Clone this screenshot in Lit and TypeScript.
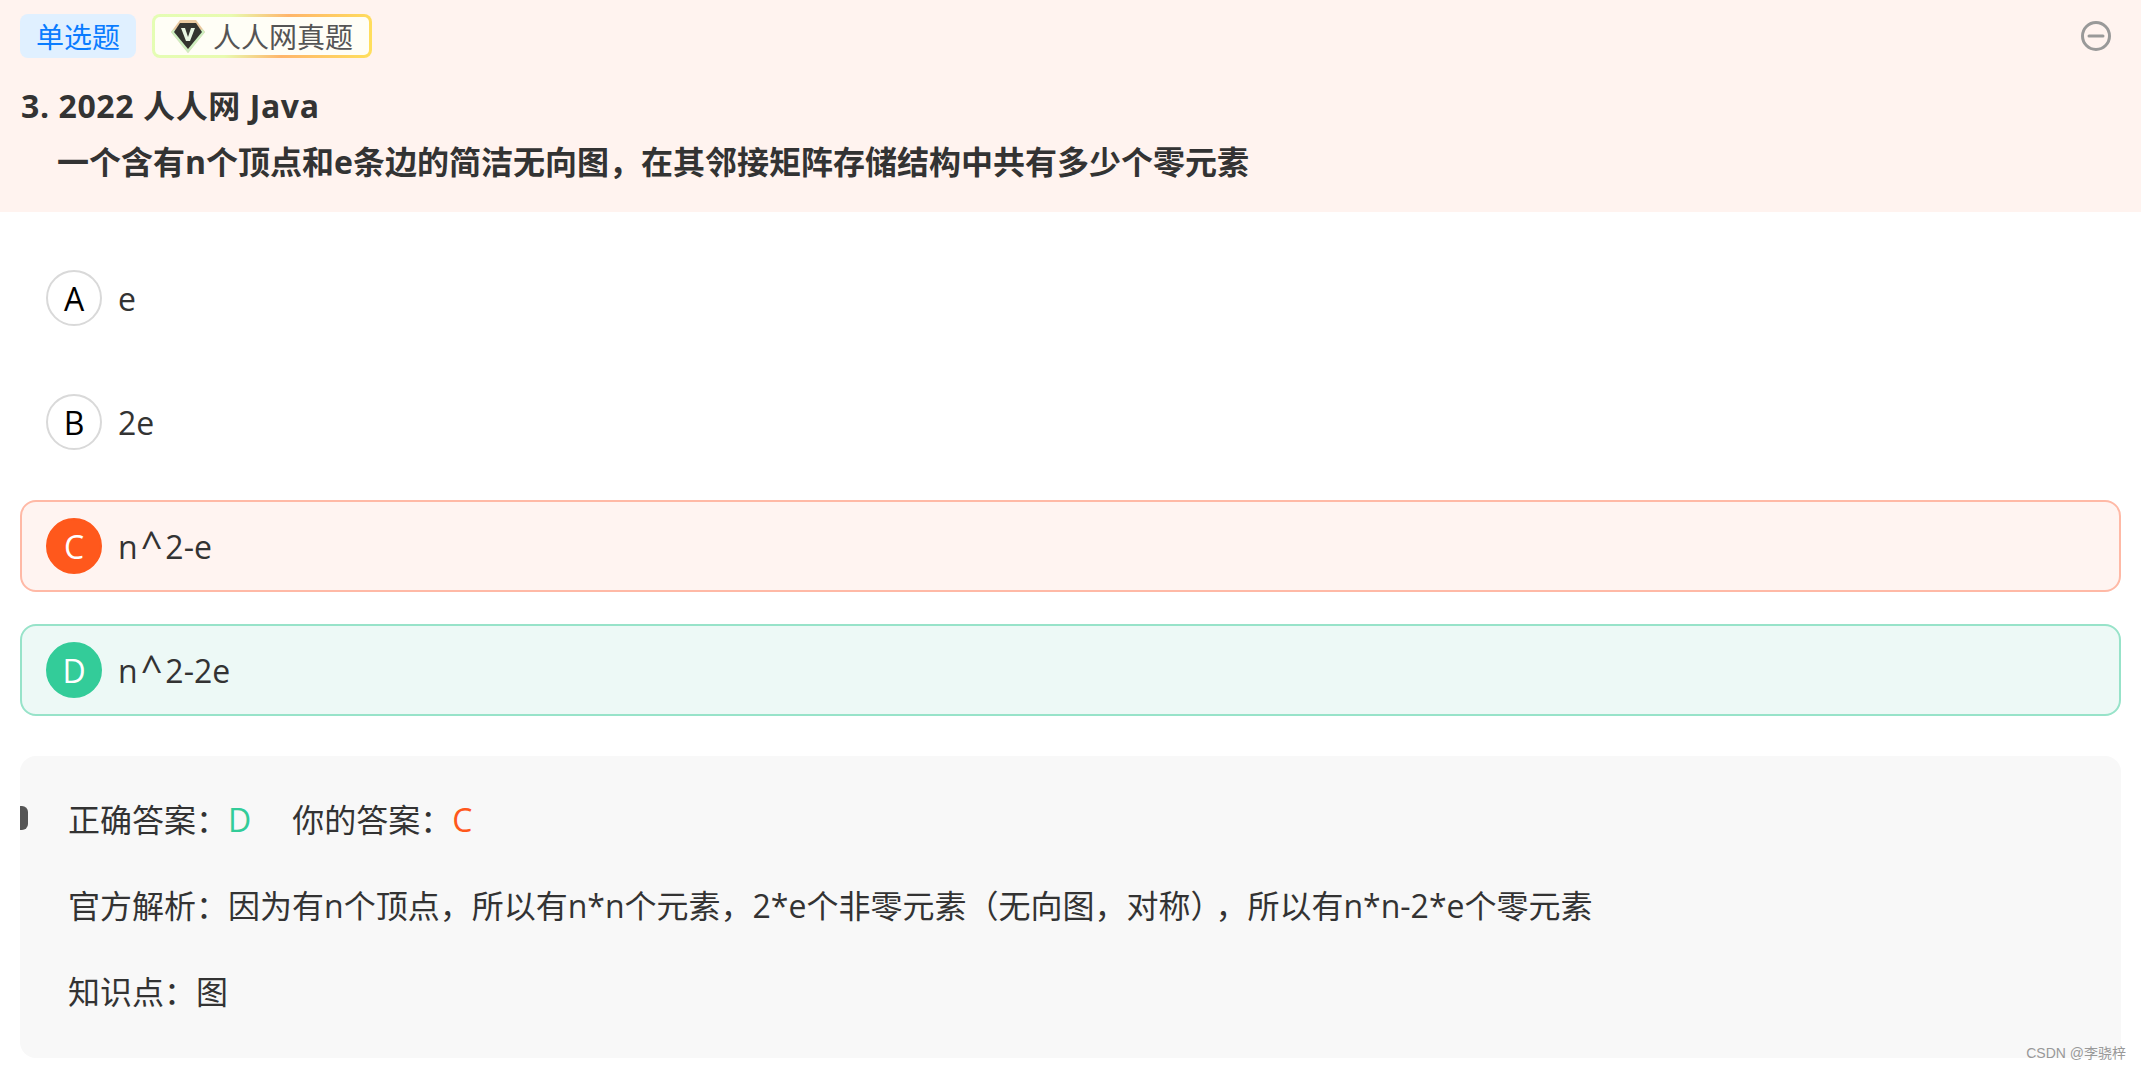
import { LitElement, css, html } from "lit";
import { customElement } from "lit/decorators.js";

const OPTIONS = [
  { key: "A", text: "e", state: "" },
  { key: "B", text: "2e", state: "" },
  { key: "C", text: "n^2-e", state: "wrong" },
  { key: "D", text: "n^2-2e", state: "right" },
];

@customElement("app-root")
export class AppRoot extends LitElement {
  static styles = css`
    :host {
      display: block;
      position: relative;
      height: 1069px;
      background: #fff;
      color: #333;
      font-family: "Open Sans", "Noto Sans CJK SC", sans-serif;
      font-size: 32px;
      text-spacing-trim: space-all;
      overflow: hidden;
    }

    .header {
      height: 212px;
      box-sizing: border-box;
      padding: 14px 20px 0;
      background: #fff3ef;
    }

    .tags {
      display: flex;
      align-items: center;
      gap: 16px;
      height: 44px;
    }

    .tag {
      display: flex;
      align-items: center;
      box-sizing: border-box;
      height: 44px;
      border-radius: 8px;
      font-size: 28px;
    }

    .tag.type {
      width: 116px;
      justify-content: center;
      background: #e0f0ff;
      color: #0a7cff;
    }

    .tag.source {
      width: 220px;
      padding-left: 16px;
      gap: 8px;
      color: #555;
      border: 3px solid transparent;
      background:
        linear-gradient(#fffef6, #fffef6) padding-box,
        linear-gradient(100deg, #e4fdb4 0%, #e8fbb0 35%, #ffb56b 60%, #ffe05c 100%) border-box;
    }

    .close {
      margin-left: auto;
      margin-right: 9px;
    }

    .title {
      margin-top: 26px;
      padding-left: 1px;
      font-size: 32px;
      font-weight: 700;
      line-height: 44px;
      letter-spacing: 0.6px;
    }

    .stem {
      margin-top: 12px;
      padding-left: 37px;
      font-size: 32px;
      font-weight: 700;
      line-height: 44px;
    }

    .options {
      display: flex;
      flex-direction: column;
      gap: 32px;
      padding: 40px 20px;
    }

    .option {
      display: flex;
      align-items: center;
      gap: 16px;
      box-sizing: border-box;
      height: 92px;
      padding-left: 24px;
      border: 2px solid transparent;
      border-radius: 16px;
    }

    .option.wrong {
      background: #fff4f1;
      border-color: #ffb9a6;
    }

    .option.right {
      background: #edf9f6;
      border-color: #97e3c9;
    }

    .letter {
      display: flex;
      align-items: center;
      justify-content: center;
      box-sizing: border-box;
      width: 56px;
      height: 56px;
      border: 2px solid #d9d9d9;
      border-radius: 50%;
      color: #000;
      background: #fff;
    }

    .wrong .letter {
      background: #ff581c;
      border-color: #ff581c;
      color: #fff;
    }

    .right .letter {
      background: #33cc99;
      border-color: #33cc99;
      color: #fff;
    }

    .caret {
      margin: 0 3px;
      font-size: 38px;
      line-height: 0;
    }

    .analysis {
      position: relative;
      display: flex;
      flex-direction: column;
      gap: 38px;
      box-sizing: border-box;
      height: 302px;
      margin: 0 20px;
      padding: 40px 48px;
      border-radius: 16px;
      background: #f8f8f8;
      line-height: 48px;
    }

    .marker {
      position: absolute;
      left: 0;
      top: 50px;
      width: 8px;
      height: 24px;
      border-radius: 0 6px 6px 0;
      background: #555;
    }

    .answer-right {
      color: #33cc99;
      margin-right: 41px;
    }

    .answer-wrong {
      color: #ff581c;
    }

    .tight {
      letter-spacing: -7px;
    }

    .watermark {
      position: absolute;
      right: 15px;
      bottom: 8px;
      font-family: "Liberation Sans", "Noto Sans CJK SC", sans-serif;
      font-size: 14px;
      line-height: 16px;
      color: #999;
    }
  `;

  // the caret sits wider in the reference font
  private optionText(text: string) {
    const parts = text.split("^");
    if (parts.length < 2) return text;
    return html`${parts[0]}<span class="caret">^</span>${parts[1]}`;
  }

  render() {
    return html`
      <header class="header">
        <div class="tags">
          <span class="tag type">单选题</span>
          <span class="tag source">
            <svg width="34" height="34" viewBox="0 0 34 34">
              <path d="M9 1h16l9 12-17 21L0 13z" fill="#e9c9a0" />
              <path d="M17 34 0 13l3-3 14 20 14-20 3 3z" fill="#cdeec0" />
              <path d="M9 4h16l6 9-14 17L3 13z" fill="#33342f" />
              <path d="M10 9h4l3 9 3-9h4l-5 13h-4z" fill="#e8f5e2" />
            </svg>
            人人网真题
          </span>
          <svg class="close" width="32" height="32" viewBox="0 0 32 32">
            <circle cx="16" cy="16" r="13.5" fill="none" stroke="#999" stroke-width="3" />
            <path d="M9 16h14" stroke="#999" stroke-width="3" stroke-linecap="round" />
          </svg>
        </div>
        <div class="title">3. 2022 人人网 Java</div>
        <div class="stem">一个含有n个顶点和e条边的简洁无向图，在其邻接矩阵存储结构中共有多少个零元素</div>
      </header>

      <section class="options">
        ${OPTIONS.map(
          (o) => html`
            <div class="option ${o.state}">
              <span class="letter">${o.key}</span>
              <span>${this.optionText(o.text)}</span>
            </div>
          `
        )}
      </section>

      <section class="analysis">
        <i class="marker"></i>
        <div>正确答案：<span class="answer-right">D</span>你的答案：<span class="answer-wrong">C</span></div>
        <div>官方解析：因为有n个顶点，所以有n*n个元素，2*e个非零元素（无向图，对称<span class="tight">）</span>，所以有n*n-2*e个零元素</div>
        <div>知识点：图</div>
      </section>

      <span class="watermark">CSDN @李骁梓</span>
    `;
  }
}
